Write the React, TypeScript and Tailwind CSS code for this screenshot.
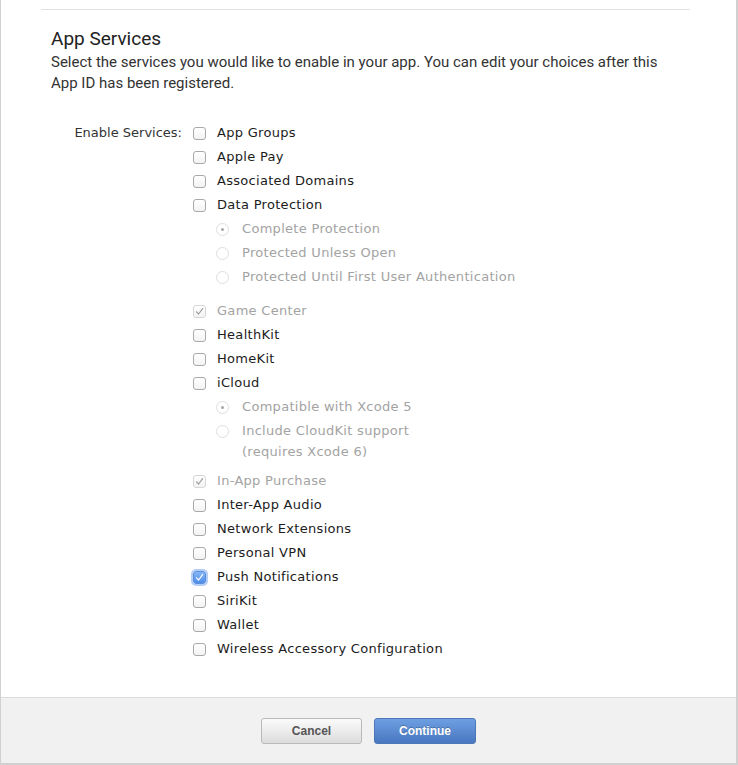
import { Fragment } from 'react'

type Service = {
  name: string
  checked?: boolean
  disabled?: boolean
  options?: { label: string[]; selected?: boolean }[]
  gap?: string
}

const SERVICES: Service[] = [
  { name: 'App Groups' },
  { name: 'Apple Pay' },
  { name: 'Associated Domains' },
  {
    name: 'Data Protection',
    options: [
      { label: ['Complete Protection'], selected: true },
      { label: ['Protected Unless Open'] },
      { label: ['Protected Until First User Authentication'] },
    ],
    gap: 'mb-[10px]',
  },
  { name: 'Game Center', checked: true, disabled: true },
  { name: 'HealthKit' },
  { name: 'HomeKit' },
  {
    name: 'iCloud',
    options: [
      { label: ['Compatible with Xcode 5'], selected: true },
      { label: ['Include CloudKit support', '(requires Xcode 6)'] },
    ],
    gap: 'mb-[7px]',
  },
  { name: 'In-App Purchase', checked: true, disabled: true },
  { name: 'Inter-App Audio' },
  { name: 'Network Extensions' },
  { name: 'Personal VPN' },
  { name: 'Push Notifications', checked: true },
  { name: 'SiriKit' },
  { name: 'Wallet' },
  { name: 'Wireless Accessory Configuration' },
]

const Check = ({ color }: { color: string }) => (
  <svg width="9" height="9" viewBox="0 0 9 9" fill="none">
    <path d="M1.5 4.8 L3.6 7 L7.6 1.6" stroke={color} strokeWidth="1.2" strokeLinecap="round" strokeLinejoin="round" />
  </svg>
)

const Checkbox = ({ checked, disabled }: { checked?: boolean; disabled?: boolean }) => {
  if (checked && !disabled)
    return (
      <span className="shrink-0 w-[13px] h-[13px] rounded-[3px] border border-[#5b8fdc] bg-linear-to-b from-[#86b6f7] to-[#4f8ee9] flex items-center justify-center shadow-[0_0_0_2px_rgba(120,165,240,0.55)]">
        <Check color="#fff" />
      </span>
    )
  return (
    <span
      className={[
        'shrink-0 w-[13px] h-[13px] rounded-[3px] border flex items-center justify-center bg-linear-to-b from-white to-[#f3f3f3]',
        disabled ? 'border-[#d6d6d6]' : 'border-[#a9a9a9]',
      ].join(' ')}
    >
      {checked && <Check color="#9c9c9c" />}
    </span>
  )
}

const Radio = ({ selected }: { selected?: boolean }) => (
  <span className="w-[13px] h-[13px] rounded-full border border-[#dedede] bg-white flex items-center justify-center">
    {selected && <span className="w-[3px] h-[3px] rounded-full bg-[#a5a5a5]" />}
  </span>
)

export default function App() {
  return (
    <div className="w-[738px] h-[765px] bg-white border-l border-r-2 border-b-2 border-[#d0d0d0] flex flex-col font-['DejaVu_Sans',sans-serif]">
      <div className="flex-1 pl-[40px] pr-[46px]">
        <div className="mt-[9px] border-t border-[#e2e2e2]" />
        <div className="pl-[10px]">
          <h2 className="mt-[16px] text-[19px] leading-[26px] text-[#222] font-['Roboto',sans-serif]">App Services</h2>
          <p className="text-[15px] leading-[21px] text-[#333] font-['Roboto',sans-serif]">
            Select the services you would like to enable in your app. You can edit your choices after this
            <br />
            App ID has been registered.
          </p>

          <div className="mt-[27px] flex text-[13px] tracking-[0.3px] text-[#1c1c1c]">
            <div className="w-[131px] h-6 flex items-center justify-end tracking-normal text-[#333]">Enable Services:</div>
            <ul className="ml-[11px] flex flex-col">
              {SERVICES.map((s) => (
                <Fragment key={s.name}>
                  <li className="h-6 flex items-center gap-[11px]">
                    <Checkbox checked={s.checked} disabled={s.disabled} />
                    <span className={s.disabled ? 'text-[#a3a3a3]' : ''}>{s.name}</span>
                  </li>
                  {s.options && (
                    <li className={s.gap}>
                      {s.options.map((o) => (
                        <div key={o.label[0]} className="flex items-start gap-[13px] pl-[23px] text-[#a3a3a3]">
                          <span className="h-6 flex items-center">
                            <Radio selected={o.selected} />
                          </span>
                          {o.label.length > 1 ? (
                            <span className="pt-[1px] leading-[21px]">
                              {o.label[0]}
                              <br />
                              {o.label[1]}
                            </span>
                          ) : (
                            <span className="h-6 flex items-center">{o.label[0]}</span>
                          )}
                        </div>
                      ))}
                    </li>
                  )}
                </Fragment>
              ))}
            </ul>
          </div>
        </div>
      </div>

      <div className="h-[66px] bg-[#f1f1f1] border-t border-[#dcdcdc] flex items-center justify-center gap-[12px] font-['Liberation_Sans',sans-serif]">
        <button className="w-[101px] h-[26px] rounded-[3px] border border-[#b9b9b9] bg-linear-to-b from-[#fbfbfb] to-[#dcdcdc] text-[12px] font-bold text-[#555]">
          Cancel
        </button>
        <button className="w-[102px] h-[26px] rounded-[3px] border border-[#4d78b8] bg-linear-to-b from-[#6e9fe2] to-[#4a77c0] text-[12px] font-bold text-white [text-shadow:0_-1px_0_rgba(0,0,0,0.25)]">
          Continue
        </button>
      </div>
    </div>
  )
}
